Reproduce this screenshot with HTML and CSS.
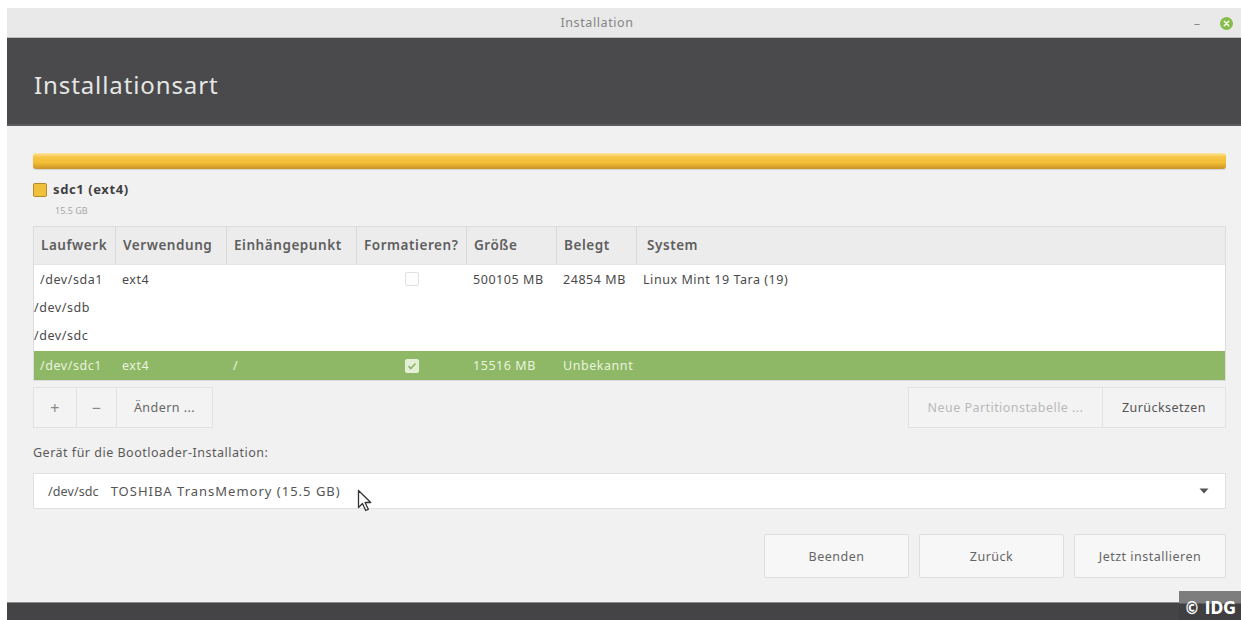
FILE: index.html
```html
<!DOCTYPE html>
<html lang="de">
<head>
<meta charset="utf-8">
<title>Installation</title>
<link rel="stylesheet" href="styles.css">
</head>
<body>
<div class="window">
  <div class="titlebar">
    <span class="title">Installation</span>
    <div class="wm-controls">
      <span class="wm-min">–</span>
      <span class="wm-close">
        <svg width="13" height="13" viewBox="0 0 13 13"><circle cx="6.5" cy="6.5" r="6.5" fill="#86bd4a"/><path d="M4.3 4.3l4.4 4.4M8.7 4.3l-4.4 4.4" stroke="#f4f9ee" stroke-width="1.6" stroke-linecap="round"/></svg>
      </span>
    </div>
  </div>

  <header class="page-header">
    <h1>Installationsart</h1>
  </header>

  <main class="content">
    <div class="disk-bar"></div>

    <div class="legend">
      <span class="legend-swatch"></span>
      <div class="legend-text">
        <span class="legend-name">sdc1 (ext4)</span>
        <span class="legend-size">15.5 GB</span>
      </div>
    </div>

    <div class="ptable">
      <div class="prow phead">
        <div class="pcell">Laufwerk</div>
        <div class="pcell">Verwendung</div>
        <div class="pcell">Einhängepunkt</div>
        <div class="pcell">Formatieren?</div>
        <div class="pcell">Größe</div>
        <div class="pcell">Belegt</div>
        <div class="pcell last">System</div>
      </div>
      <div class="prow">
        <div class="pcell child">/dev/sda1</div>
        <div class="pcell">ext4</div>
        <div class="pcell"></div>
        <div class="pcell center"><span class="check"></span></div>
        <div class="pcell">500105 MB</div>
        <div class="pcell">24854 MB</div>
        <div class="pcell">Linux Mint 19 Tara (19)</div>
      </div>
      <div class="prow">
        <div class="pcell parent">/dev/sdb</div>
      </div>
      <div class="prow">
        <div class="pcell parent">/dev/sdc</div>
      </div>
      <div class="prow selected">
        <div class="pcell child">/dev/sdc1</div>
        <div class="pcell">ext4</div>
        <div class="pcell">/</div>
        <div class="pcell center"><span class="check on"><svg width="10" height="10" viewBox="0 0 10 10"><path d="M1.5 5.2l2.3 2.3 4.7-5" fill="none" stroke="#8fb866" stroke-width="1.8"/></svg></span></div>
        <div class="pcell">15516 MB</div>
        <div class="pcell">Unbekannt</div>
        <div class="pcell"></div>
      </div>
    </div>

    <div class="toolbar">
      <div class="btn-group">
        <button class="tbtn sym plus">+</button>
        <button class="tbtn sym minus">−</button>
        <button class="tbtn edit">Ändern ...</button>
      </div>
      <div class="btn-group">
        <button class="tbtn wide disabled">Neue Partitionstabelle ...</button>
        <button class="tbtn reset">Zurücksetzen</button>
      </div>
    </div>

    <label class="boot-label">Gerät für die Bootloader-Installation:</label>
    <div class="combo">
      <span class="combo-dev">/dev/sdc</span>
      <span class="combo-name">TOSHIBA TransMemory (15.5 GB)</span>
      <svg class="combo-arrow" width="10" height="6" viewBox="0 0 10 6"><path d="M0.5 0.5h9L5 5.5z" fill="#555"/></svg>
      <svg class="cursor" width="16" height="24" viewBox="0 0 16 24"><path d="M1.5 1.5v17l4-4 3.2 7 2.6-1.2-3.2-6.8h5.6z" fill="#fff" stroke="#333" stroke-width="1.3" stroke-linejoin="round"/></svg>
    </div>

    <div class="actions">
      <button class="abtn">Beenden</button>
      <button class="abtn">Zurück</button>
      <button class="abtn install">Jetzt installieren</button>
    </div>
  </main>

  <footer class="bottom-bar"></footer>
</div>
<div class="credit">© IDG</div>
</body>
</html>
```

FILE: styles.css
```css
html, body {
  margin: 0;
  padding: 0;
  background: #ffffff;
  height: 620px;
  overflow: hidden;
  font-family: "Noto Sans", "Open Sans", sans-serif;
}

.window {
  margin: 8px 0 0 7px;
  height: 612px;
  display: flex;
  flex-direction: column;
  background: #f1f1f1;
}

/* window title bar */
.titlebar {
  height: 30px;
  flex: none;
  background: #e9e9e9;
  display: flex;
  align-items: center;
  justify-content: center;
  position: relative;
  border-bottom: 1px solid #bdbdbd;
  box-sizing: border-box;
}
.title {
  font-size: 12.5px;
  letter-spacing: 0.6px;
  color: #858585;
  margin-left: -54px;
}
.wm-controls {
  position: absolute;
  right: 8px;
  top: 0;
  height: 30px;
  display: flex;
  align-items: center;
  gap: 20px;
}
.wm-min {
  font-size: 12px;
  color: #888;
}
.wm-close { display: flex; }

/* dark page header */
.page-header {
  height: 88px;
  flex: none;
  background: #4a4a4c;
  display: flex;
  align-items: center;
  padding-left: 27px;
  border-bottom: 2px solid #5c5c5e;
  box-sizing: border-box;
}
.page-header h1 {
  margin: 6px 0 0 0;
  font-weight: 400;
  font-size: 24px;
  color: #e4e6e4;
  letter-spacing: 0.9px;
}

.content {
  flex: 1;
  padding: 27px 15px 0 26px;
  display: flex;
  flex-direction: column;
  position: relative;
}

/* partition usage bar */
.disk-bar {
  height: 16px;
  border-radius: 3px;
  background: linear-gradient(#fbe7a4 0%, #f6c544 25%, #f3bd35 60%, #c99428 100%);
  box-shadow: 0 1px 1px rgba(0,0,0,0.12);
}

.legend {
  margin-top: 13px;
  display: flex;
  gap: 6px;
  height: 40px;
}
.legend-swatch {
  width: 12px;
  height: 12px;
  margin-top: 1px;
  background: #f1c03a;
  border: 1px solid #b48a2a;
  border-radius: 2px;
}
.legend-text {
  display: flex;
  flex-direction: column;
}
.legend-name {
  font-size: 13px;
  font-weight: 700;
  letter-spacing: 0.6px;
  color: #3f3f3f;
  line-height: 15px;
}
.legend-size {
  font-size: 9px;
  color: #a8a8a8;
  margin: 7px 0 0 2px;
}

/* partition table */
.ptable {
  margin-top: 4px;
  border: 1px solid #dcdcdc;
  background: #ffffff;
}
.prow {
  display: grid;
  grid-template-columns: 82px 111px 130px 110px 90px 80px 1fr;
  height: 28px;
  align-items: center;
  font-size: 12.5px;
  letter-spacing: 0.55px;
  color: #4a4a4a;
}
.phead {
  height: 37px;
  background: #ececec;
  font-size: 13.5px;
  font-weight: 600;
  letter-spacing: 0.55px;
  color: #5e5e5e;
  border-bottom: 1px solid #e4e4e4;
}
.phead .pcell {
  height: 37px;
  line-height: 37px;
  padding-left: 7px;
  border-right: 1px solid #d9d9d9;
  box-sizing: border-box;
}
.phead .pcell.last { border-right: none; padding-left: 10px; }
.pcell {
  padding-left: 6px;
  white-space: nowrap;
}
.pcell.child { padding-left: 6px; }
.pcell.parent { padding-left: 0; }
.pcell.center {
  display: flex;
  justify-content: center;
  padding-left: 0;
}
.check {
  width: 12px;
  height: 12px;
  border: 1px solid #e0e0e0;
  border-radius: 2px;
  background: #fdfdfd;
  display: flex;
  align-items: center;
  justify-content: center;
}
.check.on {
  width: 14px;
  height: 14px;
  border: none;
  background: #e3efd6;
}
.prow.selected {
  background: #8fb866;
  color: #e9f3df;
  height: 29px;
  margin-top: 2px;
}

/* add / remove / edit toolbar */
.toolbar {
  margin-top: 6px;
  height: 41px;
  display: flex;
  justify-content: space-between;
}
.btn-group { display: flex; }
.tbtn {
  height: 41px;
  font-family: inherit;
  font-size: 12.5px;
  letter-spacing: 0.45px;
  color: #666;
  background: #f3f3f3;
  border: 1px solid #e2e2e2;
  margin-left: -1px;
  padding: 0;
}
.tbtn.sym {
  font-size: 16px;
  color: #888;
}
.tbtn.plus { width: 44px; margin-left: 0; }
.tbtn.minus { width: 41px; }
.tbtn.edit { width: 97px; }
.tbtn.wide { width: 195px; }
.tbtn.disabled { color: #b9b9b9; }
.tbtn.reset { width: 124px; color: #555; }

.boot-label {
  margin-top: 16px;
  font-size: 12.5px;
  letter-spacing: 0.5px;
  color: #5a5a5a;
  line-height: 18px;
}
.combo {
  margin-top: 11px;
  height: 34px;
  background: #ffffff;
  border: 1px solid #e0e0e0;
  display: flex;
  align-items: center;
  padding-left: 14px;
  font-size: 12.5px;
  color: #555;
  position: relative;
}
.combo-dev { letter-spacing: 0.1px; }
.combo-name {
  margin-left: 12px;
  font-size: 13px;
  letter-spacing: 1px;
}
.combo-arrow {
  margin-left: auto;
  margin-right: 16px;
}
.cursor {
  position: absolute;
  left: 323px;
  top: 15px;
}

.actions {
  margin-top: 25px;
  display: flex;
  justify-content: flex-end;
  gap: 10px;
}
.abtn {
  width: 145px;
  height: 44px;
  font-family: inherit;
  font-size: 12.5px;
  letter-spacing: 0.5px;
  color: #666;
  background: #f7f7f7;
  border: 1px solid #dedede;
  border-radius: 2px;
}
.abtn.install { width: 152px; }

.bottom-bar {
  height: 17px;
  flex: none;
  background: #444446;
  border-top: 1px solid #8a8a8a;
}

.credit {
  position: absolute;
  right: 0;
  top: 591px;
  width: 62px;
  height: 29px;
  background: linear-gradient(#7d7d7d 0, #7d7d7d 12px, #3f3f41 13px);
  color: #ffffff;
  font-family: "DejaVu Sans Condensed", "DejaVu Sans", sans-serif;
  font-weight: 700;
  font-size: 17px;
  line-height: 34px;
  text-align: center;
}
```
